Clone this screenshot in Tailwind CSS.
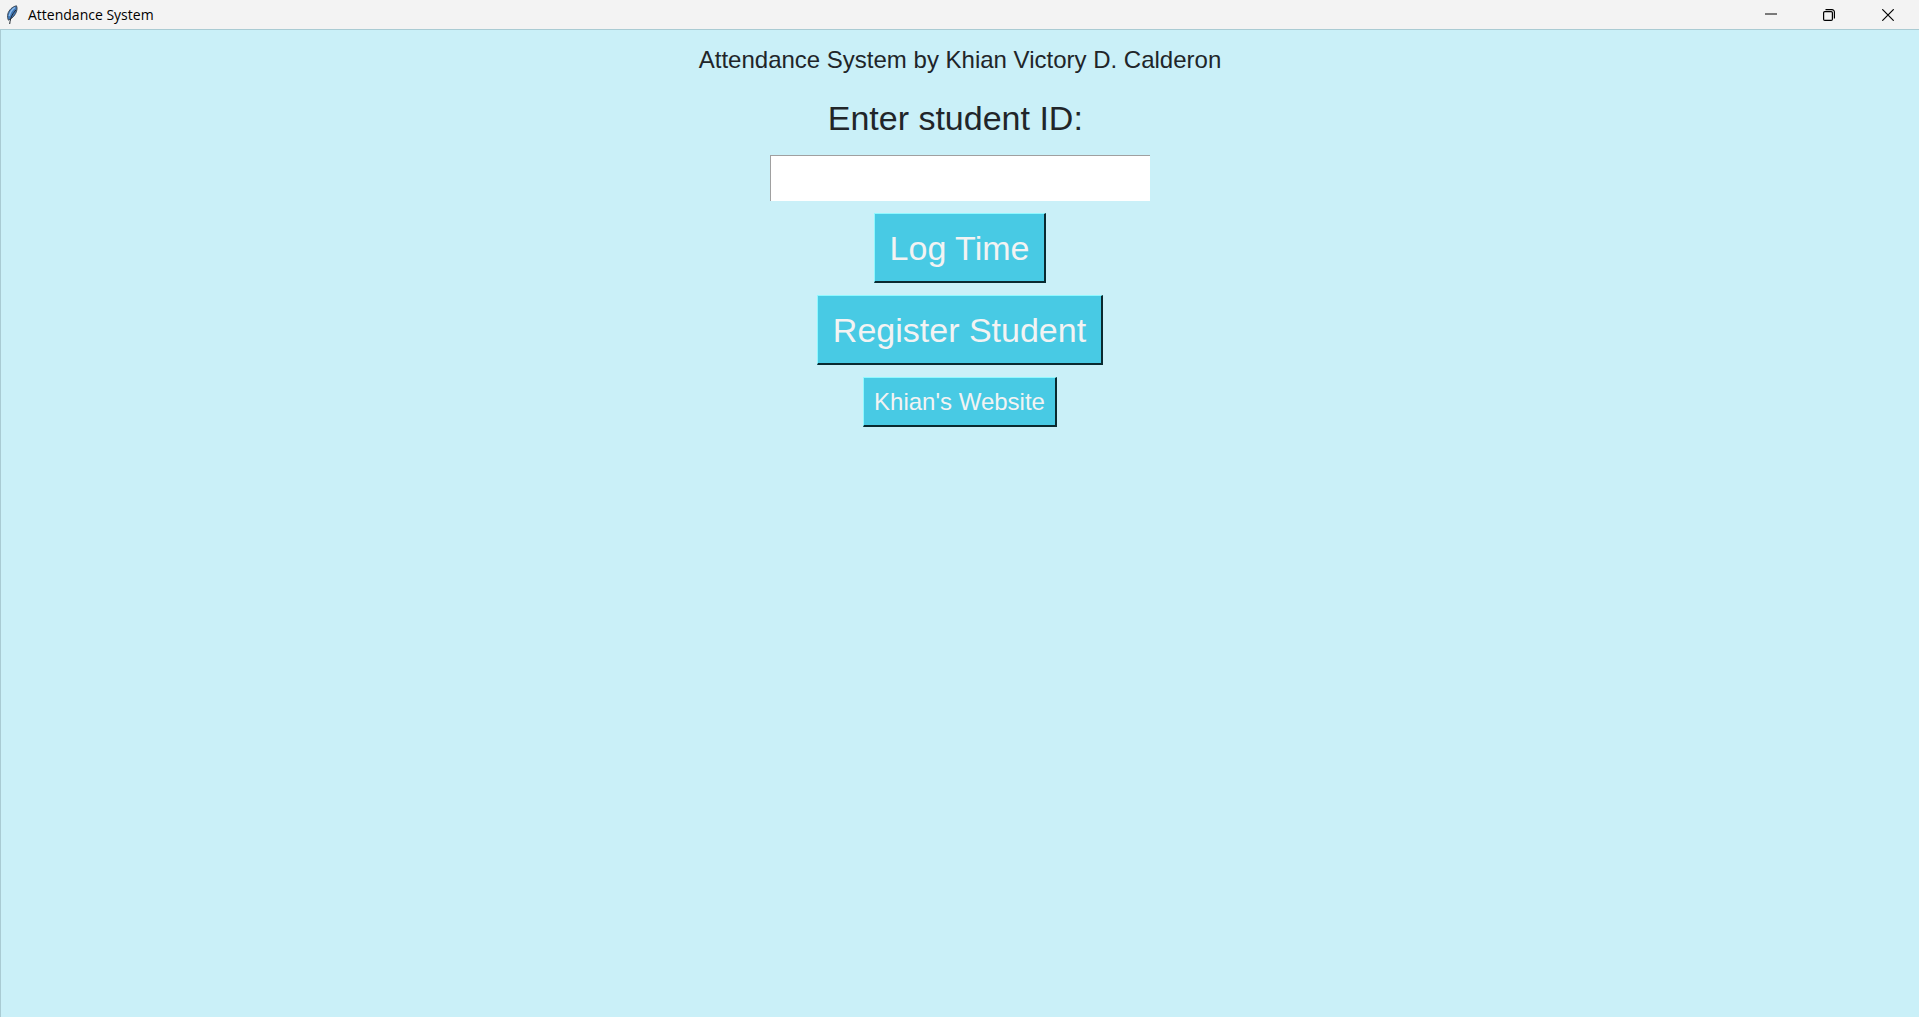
<!DOCTYPE html>
<html lang="en">
<head>
<meta charset="utf-8">
<title>Attendance System</title>
<script src="https://cdn.jsdelivr.net/npm/@tailwindcss/browser@4"></script>
</head>
<body class="flex min-h-screen flex-col bg-[#caf0f8] font-['Liberation_Sans',Arial,sans-serif] text-[#212529]">
  <header class="flex h-[29px] shrink-0 items-center justify-between bg-[#f3f3f3] text-black">
    <div class="flex items-center gap-2 pl-1">
      <svg class="h-5 w-4" viewBox="0 0 16 20" aria-hidden="true">
        <path d="M12.500 .8C8.500 1.500 4.800 5 3.800 9c-.5 2.300-.3 4.500.6 6.200C8.500 13.500 12 9.500 12.900 5c.3-1.500.2-3-.4-4.200z" fill="#3f78b8" stroke="#39424d" stroke-width=".9"/>
        <path d="M11 2.500C8.500 4 6.200 7 5.200 11" fill="none" stroke="#8fbdeb" stroke-width="1.400"/>
        <path d="M11.800 5C9.500 8 6.500 11 5.700 19" fill="none" stroke="#20262e" stroke-width="1"/>
      </svg>
      <span class="font-['Open_Sans',sans-serif] text-sm">Attendance System</span>
    </div>
    <div class="flex h-full pr-px">
      <button class="flex w-[58px] items-center justify-center" aria-label="Minimize">
        <svg class="h-3 w-3" viewBox="0 0 12 12" fill="none" stroke="#000"><path d="M0 5H12"/></svg>
      </button>
      <button class="flex w-[58px] items-center justify-center" aria-label="Restore">
        <svg class="h-3 w-3" viewBox="0 0 12 12" fill="none" stroke="#000" stroke-width="1.200"><rect x=".6" y="2.600" width="8.800" height="8.800" rx="1.200"/><path d="M2.500 .6H9a2.400 2.400 0 0 1 2.400 2.400V9.500"/></svg>
      </button>
      <button class="flex w-[60px] items-center justify-center" aria-label="Close">
        <svg class="h-3 w-3" viewBox="0 0 12 12" fill="none" stroke="#000" stroke-width="1.200"><path d="M.3 .3 11.700 11.700M11.700 .3 .3 11.700"/></svg>
      </button>
    </div>
  </header>
  <main class="flex flex-1 flex-col items-center gap-3 border-t border-l border-[#a9cbd3] pt-4">
    <h1 class="text-2xl leading-7">Attendance System by Khian Victory D. Calderon</h1>
    <label for="student-id" class="mt-2 text-[34px] leading-[49px] whitespace-pre">Enter student ID: </label>
    <input id="student-id" type="text" class="h-[46px] w-[380px] border-t border-l border-[#a0a0a0] bg-white px-1 text-[34px] outline-none">
    <button class="h-[70px] border-t border-r-2 border-b-2 border-l border-t-[#90f8ff] border-r-[#0a2a30] border-b-[#0a2a30] border-l-[#90f8ff] bg-[#48cae4] px-[15px] pt-0.5 text-[34px] text-[#f3f3f3]">Log Time</button>
    <button class="h-[70px] border-t border-r-2 border-b-2 border-l border-t-[#90f8ff] border-r-[#0a2a30] border-b-[#0a2a30] border-l-[#90f8ff] bg-[#48cae4] px-[15px] pt-0.5 text-[34px] text-[#f3f3f3]">Register Student</button>
    <button class="h-[50px] border-t border-r-2 border-b-2 border-l border-t-[#90f8ff] border-r-[#0a2a30] border-b-[#0a2a30] border-l-[#90f8ff] bg-[#48cae4] px-[10px] text-2xl text-[#f3f3f3]">Khian's Website</button>
  </main>
</body>
</html>
